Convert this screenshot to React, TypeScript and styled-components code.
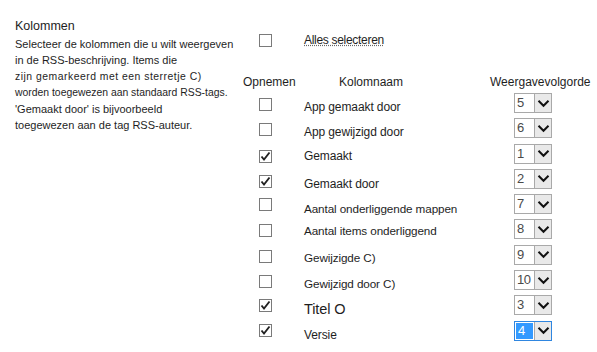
import React from 'react';
import styled, { createGlobalStyle } from 'styled-components';

const GlobalStyle = createGlobalStyle`
  html, body {
    margin: 0;
    padding: 0;
    background: #ffffff;
  }
  body {
    font-family: 'Liberation Sans', Arial, sans-serif;
    color: #1e1e1e;
  }
`;

const Page = styled.div`
  display: flex;
  width: 597px;
  height: 352px;
  overflow: hidden;
`;

const LeftPanel = styled.div`
  width: 228px;
  padding: 18px 0 0 15px;
`;

const Title = styled.div`
  font-size: 12.5px;
  line-height: 16px;
  margin-bottom: 2px;
`;

const Line = styled.div<{ $small?: boolean; $wide?: boolean }>`
  font-size: ${(p) => (p.$small ? '10.4px' : '11px')};
  line-height: 16.3px;
  letter-spacing: ${(p) => (p.$wide ? '0.5px' : '0')};
  white-space: nowrap;
`;

const RightPanel = styled.div`
  display: flex;
  flex-direction: column;
  padding-top: 30px;
`;

const SelectAllRow = styled.div`
  display: grid;
  grid-template-columns: 61px auto;
  height: 20px;
  margin-bottom: 24px;
`;

const SelectAllLabel = styled.span`
  font-size: 12px;
  line-height: 20px;
  text-decoration: underline dotted #666;
  text-underline-offset: 1px;
  letter-spacing: -0.3px;
`;

const Table = styled.div`
  display: grid;
  grid-template-columns: 61px 186px 107px;
  grid-auto-rows: 25.3px;
  grid-template-rows: 17px;
`;

const HeaderCell = styled.div<{ $pad?: number }>`
  font-size: 12px;
  line-height: 17px;
  padding-left: ${(p) => p.$pad ?? 0}px;
  white-space: nowrap;
`;

const CheckCell = styled.div<{ $top?: number }>`
  padding: ${(p) => p.$top ?? 7}px 0 0 16px;
`;

const Box = styled.span`
  display: flex;
  align-items: center;
  justify-content: center;
  box-sizing: border-box;
  width: 13px;
  height: 13px;
  border: 1px solid #7a7a7a;
  background: #fff;
`;

const NameCell = styled.div<{ $size?: number; $top?: number }>`
  font-size: ${(p) => p.$size ?? 12}px;
  line-height: 16px;
  padding-top: ${(p) => p.$top ?? 8}px;
  white-space: nowrap;
  letter-spacing: -0.1px;
`;

const OrderCell = styled.div`
  padding: 2px 0 0 24px;
`;

const Select = styled.div<{ $active?: boolean }>`
  display: flex;
  width: 38px;
  height: 20px;
  box-sizing: border-box;
  border: 1px solid ${(p) => (p.$active ? '#2f86e0' : '#a9a9a9')};
`;

const SelectValue = styled.div<{ $active?: boolean }>`
  width: 19px;
  box-sizing: border-box;
  font-size: 13px;
  padding-left: 2px;
  color: ${(p) => (p.$active ? '#ffffff' : '#4a4a4a')};
  background: ${(p) => (p.$active ? '#3399ff' : '#ffffff')};
  border: ${(p) => (p.$active ? '1px solid #ffffff' : 'none')};
  line-height: ${(p) => (p.$active ? '16px' : '18px')};
  letter-spacing: -0.6px;
`;

const SelectArrow = styled.div`
  flex: 1;
  display: flex;
  align-items: center;
  justify-content: center;
  background: #e9e9e9;
  border-left: 1px solid #a9a9a9;
`;

const Check = () => (
  <svg width="11" height="11" viewBox="0 0 11 11">
    <path d="M1.5 5.5 L4 8.5 L9.5 1.5" fill="none" stroke="#222" strokeWidth="1.9" />
  </svg>
);

const Chevron = () => (
  <svg width="13" height="9" viewBox="0 0 13 9">
    <path d="M1.5 1.8 L6.5 6.8 L11.5 1.8" fill="none" stroke="#111" strokeWidth="2" />
  </svg>
);

const CheckBox: React.FC<{ checked?: boolean }> = ({ checked }) => (
  <Box>{checked && <Check />}</Box>
);

type Row = { name: string; checked: boolean; order: number; size?: number; top?: number; boxTop?: number };

const rows: Row[] = [
  { name: 'App gemaakt door', checked: false, order: 5 },
  { name: 'App gewijzigd door', checked: false, order: 6 },
  { name: 'Gemaakt', checked: true, order: 1, top: 6, boxTop: 8 },
  { name: 'Gemaakt door', checked: true, order: 2, top: 9, boxTop: 8 },
  { name: 'Aantal onderliggende mappen', checked: false, order: 7, size: 11.7, top: 9, boxTop: 6 },
  { name: 'Aantal items onderliggend', checked: false, order: 8, size: 11.7, top: 6, boxTop: 7 },
  { name: 'Gewijzigde C)', checked: false, order: 9, size: 11.7, top: 7 },
  { name: 'Gewijzigd door C)', checked: false, order: 10, size: 11.7, top: 8 },
  { name: 'Titel O', checked: true, order: 3, size: 14.5, top: 8, boxTop: 6 },
  { name: 'Versie', checked: true, order: 4, top: 8, boxTop: 5 },
];

const App: React.FC = () => {
  return (
    <>
      <GlobalStyle />
      <Page>
        <LeftPanel>
          <Title>Kolommen</Title>
          <Line>Selecteer de kolommen die u wilt weergeven</Line>
          <Line>in de RSS-beschrijving. Items die</Line>
          <Line $small $wide>zijn gemarkeerd met een sterretje C)</Line>
          <Line $small>worden toegewezen aan standaard RSS-tags.</Line>
          <Line>'Gemaakt door' is bijvoorbeeld</Line>
          <Line>toegewezen aan de tag RSS-auteur.</Line>
        </LeftPanel>
        <RightPanel>
          <SelectAllRow>
            <CheckCell $top={4}>
              <CheckBox />
            </CheckCell>
            <SelectAllLabel>Alles selecteren</SelectAllLabel>
          </SelectAllRow>
          <Table>
            <HeaderCell>Opnemen</HeaderCell>
            <HeaderCell $pad={35}>Kolomnaam</HeaderCell>
            <HeaderCell>Weergavevolgorde</HeaderCell>
            {rows.map((r) => (
              <React.Fragment key={r.name}>
                <CheckCell $top={r.boxTop}>
                  <CheckBox checked={r.checked} />
                </CheckCell>
                <NameCell $size={r.size} $top={r.top}>
                  {r.name}
                </NameCell>
                <OrderCell>
                  <Select $active={r.order === 4}>
                    <SelectValue $active={r.order === 4}>{r.order}</SelectValue>
                    <SelectArrow>
                      <Chevron />
                    </SelectArrow>
                  </Select>
                </OrderCell>
              </React.Fragment>
            ))}
          </Table>
        </RightPanel>
      </Page>
    </>
  );
};

export default App;
